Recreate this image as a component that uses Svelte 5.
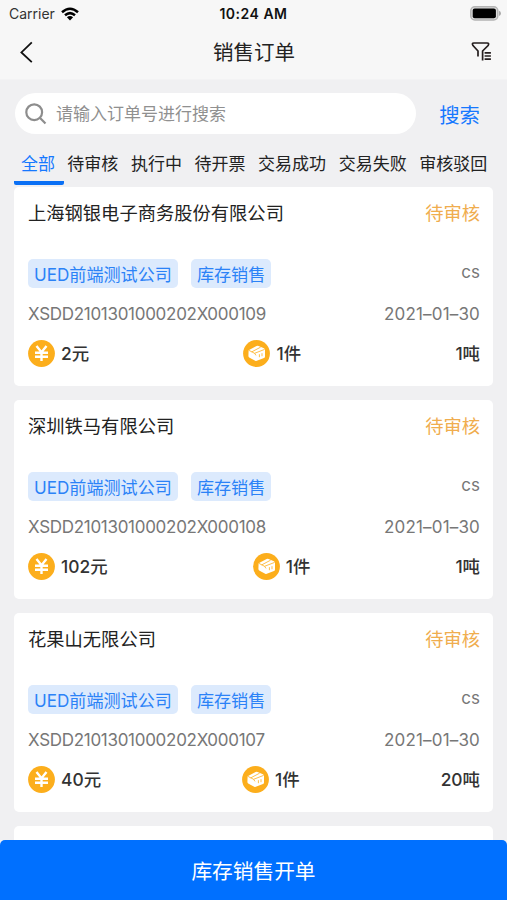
<script>
  let activeTab = $state("全部");
  let keyword = $state("");

  const tabs = ["全部", "待审核", "执行中", "待开票", "交易成功", "交易失败", "审核驳回"];

  const orders = [
    { company: "上海钢银电子商务股份有限公司", no: "XSDD2101301000202X000109", price: "2元", count: "1件", weight: "1吨" },
    { company: "深圳铁马有限公司", no: "XSDD2101301000202X000108", price: "102元", count: "1件", weight: "1吨" },
    { company: "花果山无限公司", no: "XSDD2101301000202X000107", price: "40元", count: "1件", weight: "20吨" },
  ];
</script>

<div class="page">
  <header>
    <div class="status-bar">
      <div class="carrier">
        <span>Carrier</span>
        <svg width="18" height="14" viewBox="0 0 18 14" fill="none" stroke="#000" stroke-width="2.5">
          <path d="M1 5.2Q9-1.8 17 5.2M4 8.3Q9 4 14 8.3" />
          <path d="M9 13.4L5.9 10.3Q9 7.8 12.1 10.3Z" fill="#000" stroke="none" />
        </svg>
      </div>
      <span class="time">10:24 AM</span>
      <svg class="battery" width="31" height="15" viewBox="0 0 31 15">
        <rect x="0.8" y="0.8" width="27" height="13.2" rx="4" fill="#ddd" stroke="#b4b4b4" stroke-width="1.5" />
        <rect x="2.7" y="2.6" width="23.2" height="9.6" rx="2" fill="#000" />
        <path d="M29 4.8Q31 5.6 31 7.4T29 10Z" fill="#aaa" />
      </svg>
    </div>
    <div class="nav-bar">
      <button class="icon-btn" aria-label="返回">
        <svg width="14" height="22" viewBox="0 0 14 22" fill="none" stroke="#111" stroke-width="1.8">
          <path d="M12.8 1.4L2.4 11.4L12.8 21.2" />
        </svg>
      </button>
      <h1>销售订单</h1>
      <button class="icon-btn" aria-label="筛选">
        <svg width="21" height="20" viewBox="0 0 21 20" fill="none" stroke="#251e1e" stroke-width="1.7">
          <path d="M7 14.4V9L2 3.6Q0.5 1 2.9 1H16.1Q18.5 1 17.1 3.6L11.6 9V18.4" />
          <path d="M13.6 10.8H19.9M13.6 14H19.9M13.6 17.2H19.9" />
        </svg>
      </button>
    </div>
  </header>

  <div class="search">
    <label class="search-box">
      <svg width="22" height="22" viewBox="0 0 22 22" fill="none" stroke="#8d8d8d" stroke-width="2.2">
        <circle cx="9.2" cy="9.2" r="7.9" />
        <path d="M14.8 14.8L20.5 20.6" />
      </svg>
      <input type="text" placeholder="请输入订单号进行搜索" bind:value={keyword} />
    </label>
    <button class="search-btn">搜索</button>
  </div>

  <nav class="tabs">
    {#each tabs as tab}
      <button class="tab" class:active={tab === activeTab} onclick={() => (activeTab = tab)}>{tab}</button>
    {/each}
  </nav>

  <main>
    {#each orders as order}
      <article class="card">
        <div class="row head">
          <h2>{order.company}</h2>
          <span class="state">待审核</span>
        </div>
        <div class="row tag-row">
          <div class="tags">
            <span class="tag">UED前端测试公司</span>
            <span class="tag">库存销售</span>
          </div>
          <span class="user">cs</span>
        </div>
        <div class="row info">
          <span class="order-no">{order.no}</span>
          <span class="date">2021–01–30</span>
        </div>
        <div class="row totals">
          <div class="total">
            <svg width="27" height="27" viewBox="0 0 27 27">
              <circle cx="13.5" cy="13.5" r="13.4" fill="#fcae1c" />
              <path d="M8.5 6L13.5 12.2L18.5 6M13.5 12V21M7 12.8H20M7 16.8H20" fill="none" stroke="#fff" stroke-width="2.4" />
            </svg>
            <span class="value">{order.price}</span>
          </div>
          <div class="total">
            <svg width="27" height="27" viewBox="0 0 27 27">
              <circle cx="13.5" cy="13.5" r="13.4" fill="#fcae1c" />
              <path d="M5.6 10.2L13.6 6Q14.6 5.6 15.6 6L20.9 8.3Q22 8.8 22 10V16.5Q22 17.5 21 18L13.8 20.8Q13 21.1 12.2 20.7L6.6 17.8Q5.4 17.2 5.4 16Z" fill="#fff" />
              <path d="M5.8 10.3L11.6 13.3L13 15.4M11.6 13.3L21.6 9.4M8.7 11.9L17.6 7.2M16.4 14.2V17.2M19 13.2V16.2" fill="none" stroke="#fcae1c" stroke-width="0.8" />
            </svg>
            <span class="value">{order.count}</span>
          </div>
          <span class="value">{order.weight}</span>
        </div>
      </article>
    {/each}
    <article class="card"></article>
  </main>

  <button class="create-btn">库存销售开单</button>
</div>

<style>
  :global(body) {
    background: #f0f0f2;
  }

  .page {
    display: flex;
    flex-direction: column;
    height: 900px;
    overflow: hidden;
    background: #f0f0f2;
    color: #222;
    font-family: Inter, "Noto Sans CJK SC", sans-serif;
  }

  button {
    padding: 0;
    border: none;
    background: none;
    color: inherit;
    font: inherit;
    cursor: pointer;
  }

  svg {
    display: block;
    flex: none;
  }

  header {
    flex: none;
    height: 80px;
    background: #f7f7f7;
    border-bottom: 1px solid #f3f3f4;
    box-sizing: border-box;
  }

  .status-bar {
    display: grid;
    grid-template-columns: 1fr auto 1fr;
    align-items: center;
    height: 27px;
    padding: 0 6px 0 9px;
    font-size: 14px;
  }

  .carrier {
    display: flex;
    align-items: center;
    gap: 6px;
    color: #333;
    font-size: 14px;
  }

  .time {
    margin-right: 3px;
    color: #111;
    font-weight: 600;
    letter-spacing: 0.5px;
  }

  .battery {
    justify-self: end;
  }

  .nav-bar {
    display: flex;
    align-items: center;
    justify-content: space-between;
    height: 50px;
    padding: 0 15px 0 19px;
  }

  h1 {
    margin: 0;
    padding: 1px 0 0 4px;
    font-size: 20.5px;
    line-height: 50px;
    font-weight: 400;
  }

  .search {
    display: flex;
    align-items: center;
    flex: none;
    height: 41px;
    margin: 13px 27px 0 15px;
  }

  .search-box {
    display: flex;
    align-items: center;
    gap: 9px;
    width: 401px;
    height: 41px;
    padding-left: 10px;
    box-sizing: border-box;
    border-radius: 21px;
    background: #fff;
  }

  .search-box input {
    flex: 1;
    min-width: 0;
    padding: 0;
    border: none;
    outline: none;
    background: none;
    font: 17px/24px Inter, "Noto Sans CJK SC", sans-serif;
  }

  .search-box input::placeholder {
    color: #909090;
    opacity: 1;
  }

  .search-btn {
    margin-left: auto;
    color: #1678ff;
    font-size: 20.4px;
  }

  .tabs {
    display: flex;
    flex: none;
    height: 51px;
    padding-left: 14px;
  }

  .tab {
    flex: none;
    height: 51px;
    padding: 18px 6.3px 5px;
    box-sizing: border-box;
    border-bottom: 4px solid transparent;
    font-size: 17px;
    line-height: 24px;
    white-space: nowrap;
  }

  .tab.active {
    padding-left: 7px;
    padding-right: 9px;
    margin-right: -3px;
    color: #1678ff;
    background: linear-gradient(#0a70f5, #0a70f5) bottom / 100% 4px no-repeat border-box;
    border-radius: 0 0 2px 2px;
  }

  main {
    display: flex;
    flex-direction: column;
    flex: 1;
    gap: 14px;
    min-height: 0;
    margin: 2px 14px 0;
    overflow: hidden;
  }

  .card {
    flex: none;
    height: 199px;
    padding: 0 13px 0 14px;
    box-sizing: border-box;
    border-radius: 5px;
    background: #fff;
  }

  .row {
    display: flex;
    align-items: center;
    justify-content: space-between;
  }

  .head {
    height: 50px;
    font-size: 18.3px;
  }

  h2 {
    margin: 0;
    font-size: 18.3px;
    font-weight: 400;
  }

  .state {
    color: #f0ad4e;
  }

  .tag-row {
    height: 29px;
    margin-top: 22px;
  }

  .tags {
    display: flex;
    gap: 13px;
  }

  .tag {
    height: 29px;
    padding: 1px 6px 0;
    box-sizing: border-box;
    border-radius: 5px;
    background: #dceafd;
    color: #2b82f7;
    font-size: 17.1px;
    line-height: 29px;
  }

  .user {
    color: #777;
    font-size: 17px;
    line-height: 24px;
    padding-bottom: 4px;
  }

  .info {
    height: 24px;
    margin-top: 14px;
    color: #777;
    font-size: 17px;
  }

  .order-no {
    letter-spacing: -0.29px;
  }

  .date {
    letter-spacing: 0.18px;
  }

  .totals {
    height: 28px;
    margin-top: 13px;
    color: #333;
    font-size: 17.4px;
    font-weight: 500;
  }

  .total {
    display: flex;
    align-items: center;
    gap: 6px;
  }

  .value {
    padding-bottom: 2px;
  }

  .create-btn {
    flex: none;
    height: 60px;
    border-radius: 5px 5px 0 0;
    background: #0070ff;
    color: #fff;
    font-size: 20.7px;
  }
</style>
